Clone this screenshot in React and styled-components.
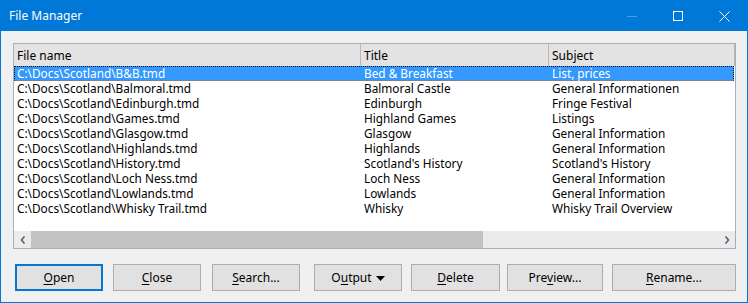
import React from 'react'
import styled, { createGlobalStyle } from 'styled-components'

const GlobalStyle = createGlobalStyle`
  html, body {
    margin: 0;
    padding: 0;
    background: #ffffff;
  }
  * {
    box-sizing: border-box;
  }
`

const Window = styled.div`
  width: 748px;
  height: 303px;
  border: 1px solid #0078d7;
  background: #f0f0f0;
  display: flex;
  flex-direction: column;
  font-family: "Noto Sans", "Open Sans", sans-serif;
  font-size: 12px;
  line-height: 14px;
  color: #000;
`

const TitleBar = styled.div`
  height: 30px;
  background: #0078d7;
  color: #fff;
  display: flex;
  align-items: center;
  padding-left: 8px;
  flex-shrink: 0;
`

const TitleText = styled.div`
  flex: 1;
  font-size: 12px;
  padding-bottom: 1px;
`

const TitleButton = styled.div`
  width: 46px;
  height: 30px;
  display: flex;
  align-items: center;
  justify-content: center;
`

const Client = styled.div`
  flex: 1;
  padding: 12px 11px 0 12px;
  display: flex;
  flex-direction: column;
`

const ListBox = styled.div`
  height: 206px;
  border: 1px solid #a5b0bf;
  background: #fff;
  display: flex;
  flex-direction: column;
`

const Header = styled.div`
  height: 22px;
  display: flex;
  background: #e3e3e3;
  flex-shrink: 0;
`

const HeaderCell = styled.div`
  width: ${(p) => (p.w ? `${p.w}px` : 'auto')};
  flex: ${(p) => (p.w ? '0 0 auto' : '1')};
  border-right: 1px solid #b9b9b9;
  padding-left: 3px;
  padding-top: 1px;
  display: flex;
  align-items: center;
`

const Rows = styled.div`
  flex: 1;
`

const Row = styled.div`
  height: 15px;
  display: flex;
  align-items: flex-start;
  background: ${(p) => (p.selected ? '#3399ff' : 'transparent')};
  color: ${(p) => (p.selected ? '#fff' : '#000')};
  border: 1px dotted ${(p) => (p.selected ? '#111' : 'transparent')};
  border-bottom-color: ${(p) => (p.selected ? '#c96a10' : 'transparent')};
  margin-right: 1px;
`

const Cell = styled.div`
  width: ${(p) => (p.w ? `${p.w}px` : 'auto')};
  flex: ${(p) => (p.w ? '0 0 auto' : '1')};
  padding-left: 2px;
  height: 13px;
  line-height: 13px;
  font-size: 11.8px;
  white-space: nowrap;
`

const HScroll = styled.div`
  height: 17px;
  display: flex;
  background: #ebebeb;
  flex-shrink: 0;
`

const ScrollArrow = styled.div`
  width: 17px;
  display: flex;
  align-items: center;
  justify-content: center;
`

const Track = styled.div`
  flex: 1;
  display: flex;
`

const Thumb = styled.div`
  width: 452px;
  background: #c2c2c2;
`

const ButtonRow = styled.div`
  display: flex;
  margin-top: 15px;
  padding-left: 2px;
`

const Button = styled.div`
  width: ${(p) => p.w}px;
  height: 27px;
  margin-left: ${(p) => p.gap || 0}px;
  background: #e1e1e1;
  border: ${(p) => (p.primary ? '2px solid #0078d7' : '1px solid #adadad')};
  display: flex;
  align-items: center;
  justify-content: center;
  gap: 4px;
  padding-top: 1px;

  u {
    text-decoration: underline;
    text-underline-offset: 2px;
  }
`

const files = [
  ['C:\\Docs\\Scotland\\B&B.tmd', 'Bed & Breakfast', 'List, prices'],
  ['C:\\Docs\\Scotland\\Balmoral.tmd', 'Balmoral Castle', 'General Informationen'],
  ['C:\\Docs\\Scotland\\Edinburgh.tmd', 'Edinburgh', 'Fringe Festival'],
  ['C:\\Docs\\Scotland\\Games.tmd', 'Highland Games', 'Listings'],
  ['C:\\Docs\\Scotland\\Glasgow.tmd', 'Glasgow', 'General Information'],
  ['C:\\Docs\\Scotland\\Highlands.tmd', 'Highlands', 'General Information'],
  ['C:\\Docs\\Scotland\\History.tmd', "Scotland's History", "Scotland's History"],
  ['C:\\Docs\\Scotland\\Loch Ness.tmd', 'Loch Ness', 'General Information'],
  ['C:\\Docs\\Scotland\\Lowlands.tmd', 'Lowlands', 'General Information'],
  ['C:\\Docs\\Scotland\\Whisky Trail.tmd', 'Whisky', 'Whisky Trail Overview'],
]

const buttons = [
  { pre: '', key: 'O', post: 'pen', w: 88, gap: 0, primary: true },
  { pre: '', key: 'C', post: 'lose', w: 88, gap: 10 },
  { pre: '', key: 'S', post: 'earch...', w: 88, gap: 11 },
  { pre: 'O', key: 'u', post: 'tput', w: 88, gap: 14, menu: true },
  { pre: '', key: 'D', post: 'elete', w: 89, gap: 9 },
  { pre: 'Pre', key: 'v', post: 'iew...', w: 96, gap: 7 },
  { pre: '', key: 'R', post: 'ename...', w: 124, gap: 9 },
]

const App = () => {
  return (
    <>
      <GlobalStyle />
      <Window>
        <TitleBar>
          <TitleText>File Manager</TitleText>
          <TitleButton>
            <svg width="10" height="10" viewBox="0 0 10 10">
              <line x1="0" y1="5.5" x2="10" y2="5.5" stroke="#4aa0e6" strokeWidth="1" />
            </svg>
          </TitleButton>
          <TitleButton>
            <svg width="10" height="10" viewBox="0 0 10 10">
              <rect x="0.5" y="0.5" width="9" height="9" fill="none" stroke="#fff" strokeWidth="1" />
            </svg>
          </TitleButton>
          <TitleButton>
            <svg width="11" height="11" viewBox="0 0 11 11">
              <path d="M0.5 0.5 L10.5 10.5 M10.5 0.5 L0.5 10.5" stroke="#fff" strokeWidth="1" />
            </svg>
          </TitleButton>
        </TitleBar>
        <Client>
          <ListBox>
            <Header>
              <HeaderCell w={347}>File name</HeaderCell>
              <HeaderCell w={188}>Title</HeaderCell>
              <HeaderCell>Subject</HeaderCell>
            </Header>
            <Rows>
              {files.map((f, i) => (
                <Row key={f[0]} selected={i === 0}>
                  <Cell w={347}>{f[0]}</Cell>
                  <Cell w={188}>{f[1]}</Cell>
                  <Cell>{f[2]}</Cell>
                </Row>
              ))}
            </Rows>
            <HScroll>
              <ScrollArrow>
                <svg width="6" height="8" viewBox="0 0 6 8">
                  <path d="M4.5 0.5 L1.5 4 L4.5 7.5" fill="none" stroke="#606060" strokeWidth="1.6" />
                </svg>
              </ScrollArrow>
              <Track>
                <Thumb />
              </Track>
              <ScrollArrow>
                <svg width="6" height="8" viewBox="0 0 6 8">
                  <path d="M1.5 0.5 L4.5 4 L1.5 7.5" fill="none" stroke="#606060" strokeWidth="1.6" />
                </svg>
              </ScrollArrow>
            </HScroll>
          </ListBox>
          <ButtonRow>
            {buttons.map((b) => (
              <Button key={b.key + b.post} w={b.w} gap={b.gap} primary={b.primary}>
                <span>
                  {b.pre}
                  <u>{b.key}</u>
                  {b.post}
                </span>
                {b.menu && (
                  <svg width="9" height="5" viewBox="0 0 9 5">
                    <path d="M0 0 L9 0 L4.5 5 Z" fill="#000" />
                  </svg>
                )}
              </Button>
            ))}
          </ButtonRow>
        </Client>
      </Window>
    </>
  )
}

export default App
